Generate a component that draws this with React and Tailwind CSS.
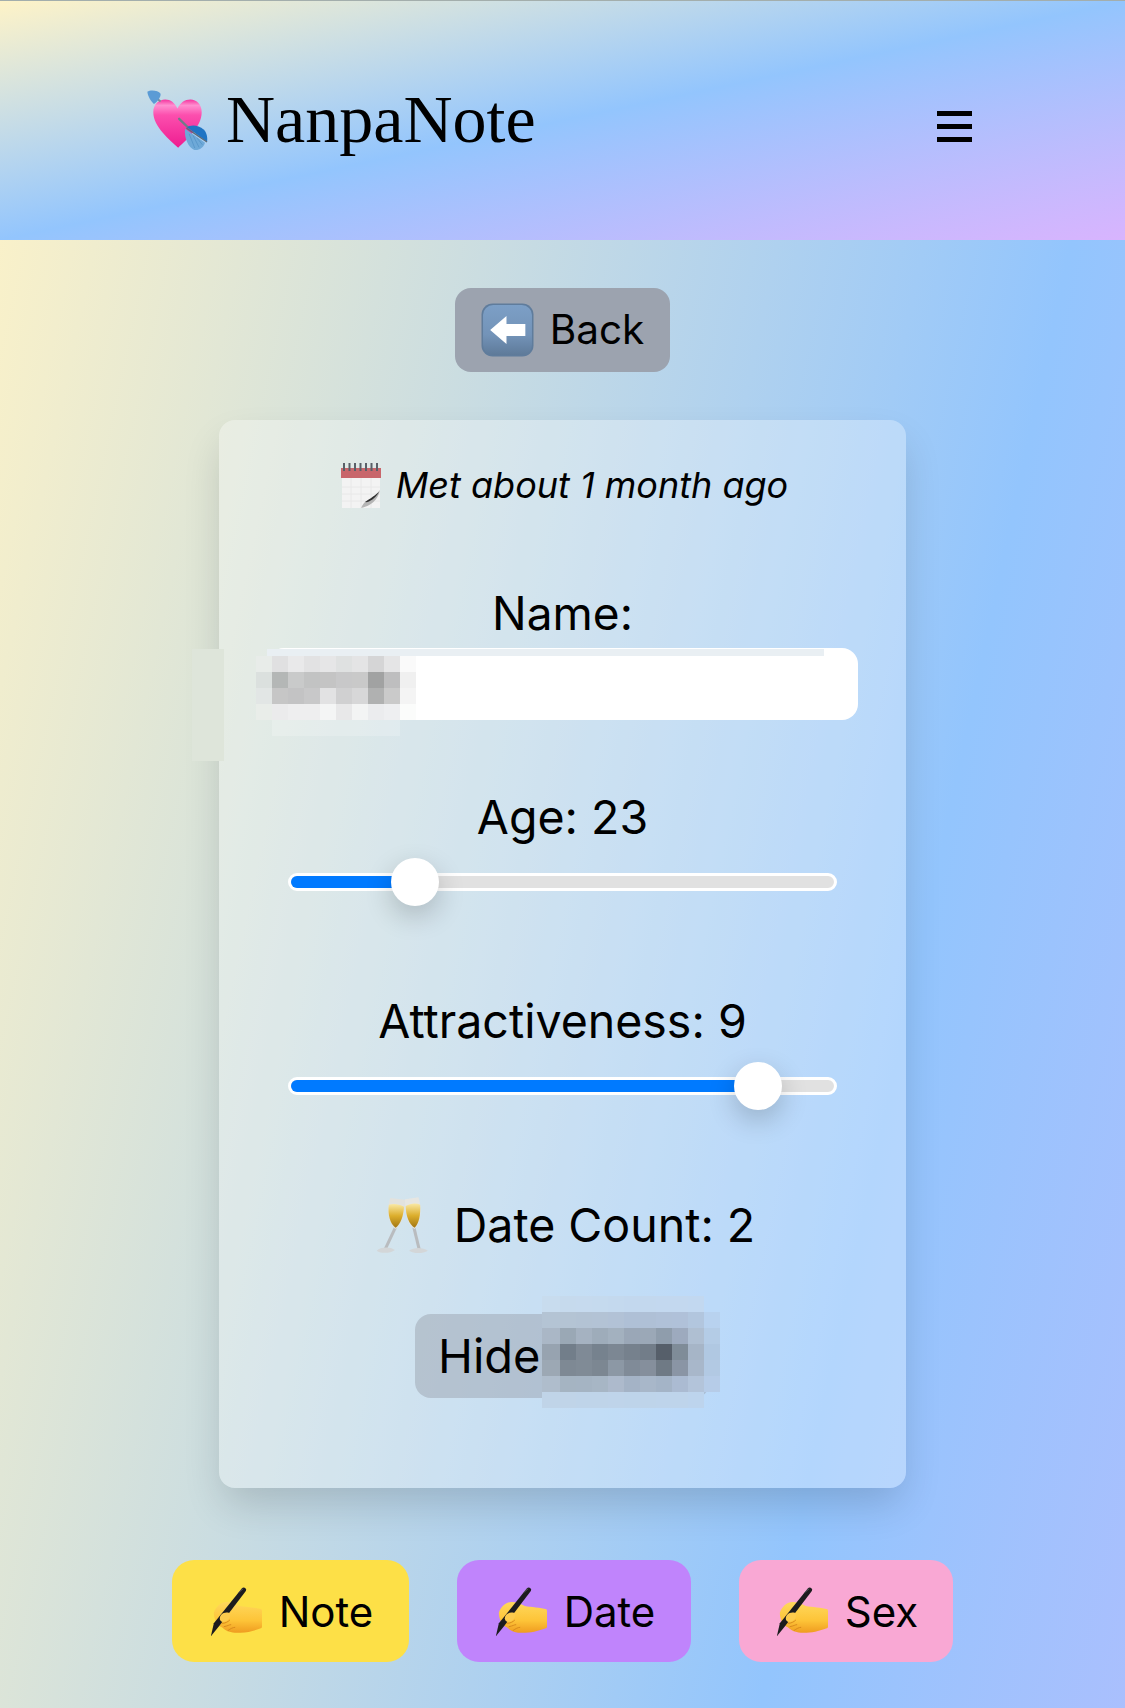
import React from 'react';

const SANS = "font-['Inter','Liberation_Sans',sans-serif]";

const nameBlocks = [
    ['#e8ece9', '#e0e0e1', '#e9e9ea', '#e2e2e3', '#e6e6e7', '#dfe1e1', '#e4e4e5', '#d5d5d6', '#e5e5e6', '#fafafa'],
    ['#dbe0de', '#b4b7b6', '#c9caca', '#c2c3c3', '#c4c4c4', '#c8c8c9', '#c9c9c9', '#a1a2a2', '#bebebf', '#f0f0f0'],
    ['#e2e6e5', '#c6c6c6', '#c3c3c4', '#c8c8c9', '#e2e2e3', '#d0d0d1', '#d7d7d8', '#b0b1b1', '#cacaca', '#f4f4f4'],
    ['#e9ede9', '#ebebec', '#eeeeef', '#eeeeef', '#f4f5f5', '#e8e8e9', '#f3f4f4', '#ebecee', '#eeeff1', '#fbfcfb'],
];

const hideBlocks = [
    ['#c8dcee', '#c6daed', '#c6daee', '#c5daee', '#c4d9ee', '#c3d8ee', '#c3d8ee', '#c3d8ef', '#c3d8ef', '#c2d8f0', 'transparent'],
    ['#b4c4d4', '#b4c4d4', '#b3c3d4', '#b3c3d5', '#b2c2d6', '#afc0d6', '#afc0d6', '#b0c1d8', '#b0c1d9', '#b2c6de', '#b8d2ef'],
    ['#aab7c6', '#9aa8b5', '#a5b2c1', '#9eacba', '#a3b1bf', '#9aa7b7', '#9ba8b7', '#8f9dac', '#9daabe', '#afbfd2', '#b4cce6'],
    ['#97a3b0', '#727e8a', '#7f8a96', '#76828e', '#7c8793', '#76818d', '#727d89', '#565f6a', '#7f8c98', '#a6b5c7', '#b0c8e2'],
    ['#9ca8b4', '#7e8994', '#808b96', '#7c8792', '#8c98a5', '#808b98', '#858f9c', '#6f7a85', '#8a95a5', '#a8b7ca', '#b2c9e3'],
    ['#afbdcc', '#a5b4c2', '#a5b4c3', '#a7b6c5', '#adbacc', '#a4b3c6', '#a8b7c9', '#a4b4c7', '#abbbd2', '#b3c4da', '#b6cce8'],
    ['#c0d4e8', '#c0d4e8', '#bfd4e9', '#bfd4e9', '#bfd4ea', '#bed4ea', '#bed4ea', '#bed4eb', '#bed4eb', '#bdd4ed', 'transparent'],
];

function HeartArrow() {
    return (
        <svg width="63" height="63" viewBox="45 60 190 190" className="shrink-0">
            <defs>
                <linearGradient id="heartFill" x1="0" y1="0" x2="0" y2="1">
                    <stop offset="0" stopColor="#f5359f" />
                    <stop offset="0.12" stopColor="#ff8fd0" />
                    <stop offset="0.32" stopColor="#fc4fae" />
                    <stop offset="1" stopColor="#ee1c90" />
                </linearGradient>
            </defs>
            <path d="M145 237C122 215 70 175 70 130C70 107 86 92 106 92C122 92 135 102 143 119C151 102 165 92 182 92C201 92 216 107 216 130C216 175 168 215 145 237Z" fill="url(#heartFill)" />
            <path d="M80 88L92 98" stroke="#7d8b97" strokeWidth="6" />
            <path d="M52 68C62 62 85 64 92 74C94 84 80 100 72 105C64 98 54 84 52 68Z" fill="#5b9bd5" />
            <path d="M148 150L175 176" stroke="#6f7c88" strokeWidth="7" strokeLinecap="round" />
            <path d="M172 175C180 168 205 166 222 182C232 192 234 208 232 220Z" fill="#1f74c4" />
            <path d="M166 180L226 222C222 236 208 246 194 244C176 238 162 206 166 180Z" fill="#6ea9d8" />
            <path d="M170 178L232 220" stroke="#5c6b78" strokeWidth="4" />
            <path d="M178 195L195 238M190 200L208 236M202 208L218 228" stroke="#4f8fc4" strokeWidth="2" />
        </svg>
    );
}

function BackArrow() {
    return (
        <svg width="53" height="54" viewBox="0 0 52 54" preserveAspectRatio="none" className="shrink-0">
            <defs>
                <linearGradient id="backFill" x1="0" y1="0" x2="0" y2="1">
                    <stop offset="0" stopColor="#7c9fc6" />
                    <stop offset="0.6" stopColor="#7393b8" />
                    <stop offset="1" stopColor="#5e7a99" />
                </linearGradient>
            </defs>
            <rect x="0.5" y="0.5" width="51" height="53" rx="11" fill="#5f7c9c" />
            <rect x="2" y="2" width="48" height="50" rx="10" fill="url(#backFill)" />
            <path d="M9 27L25 13V21H43.5V33H25V41Z" fill="#fff" />
        </svg>
    );
}

function CalendarIcon() {
    return (
        <svg width="40" height="45" viewBox="0 0 40 45" className="shrink-0">
            <rect x="1" y="14" width="38" height="31" fill="#f3f3f3" />
            <path d="M1 24H39M1 31H39M1 38H39M10 14V45M20 14V45M30 14V45" stroke="#e8e8e8" strokeWidth="1" />
            <rect x="0" y="5" width="40" height="10" fill="#c8666b" />
            <path d="M3 0V8M8.500 0V8M14 0V8M19.500 0V8M25 0V8M30.500 0V8M36 0V8" stroke="#5a6068" strokeWidth="2" />
            <path d="M39 27C34 33 30 36 24 39C22 41 21 43 20 45C30 43 37 37 39 27Z" fill="#b5b5b5" />
            <path d="M38 29C32 34 27 37 24 39C27 40 34 36 38 29Z" fill="#2f2f2f" />
        </svg>
    );
}

function Champagne() {
    return (
        <svg width="52" height="58" viewBox="38 36 154 172" className="shrink-0">
            <defs>
                <linearGradient id="wine" x1="0" y1="0" x2="0" y2="1">
                    <stop offset="0" stopColor="#f9e8a4" />
                    <stop offset="0.5" stopColor="#dcae2c" />
                    <stop offset="1" stopColor="#a27612" />
                </linearGradient>
            </defs>
            <path d="M96 128L66 192" stroke="#b9bcbf" strokeWidth="9" />
            <path d="M40 198C52 186 80 186 94 196C80 207 52 207 40 198Z" fill="#d3d6d8" />
            <path d="M80 42L124 47C124 82 116 120 96 134C76 122 68 80 80 42Z" fill="#e2e2de" />
            <path d="M76 62C90 58 106 60 121 68C119 96 111 120 96 130C80 120 72 90 76 62Z" fill="url(#wine)" />
            <path d="M150 128L166 194" stroke="#b9bcbf" strokeWidth="9" />
            <path d="M136 198C150 188 176 188 192 198C176 207 150 207 136 198Z" fill="#d3d6d8" />
            <path d="M124 46L164 40C174 75 172 116 152 134C133 125 122 85 124 46Z" fill="#e6e6e2" />
            <path d="M126 66C140 58 156 56 169 62C170 92 166 118 152 130C136 121 126 95 126 66Z" fill="url(#wine)" />
        </svg>
    );
}

function WritingHand({ id }) {
    return (
        <svg width="52" height="50" viewBox="35 30 155 150" className="shrink-0">
            <defs>
                <linearGradient id={id} x1="0" y1="0" x2="0" y2="1">
                    <stop offset="0" stopColor="#ffd85c" />
                    <stop offset="0.6" stopColor="#fdc438" />
                    <stop offset="1" stopColor="#ef9c20" />
                </linearGradient>
            </defs>
            <path d="M46 110C52 92 68 78 84 78C100 78 112 84 124 90C142 94 172 94 189 100C195 118 195 142 189 156C172 162 150 170 126 170C104 172 84 168 70 154C56 148 46 130 46 110Z" fill={`url(#${id})`} />
            <path d="M76 152C88 150 92 146 98 146M88 164C96 158 104 154 110 154M70 142C80 142 88 138 94 132" stroke="#d98a1c" strokeWidth="3" fill="none" />
            <path d="M131 36C137 31 146 38 142 45L62 150L37 181L46 142Z" fill="#1c1c1e" />
            <path d="M120 50L134 38" stroke="#5a5a60" strokeWidth="3" />
            <path d="M68 116C76 108 90 108 96 114C96 126 86 138 72 138C62 134 62 124 68 116Z" fill="#fdcb4d" />
        </svg>
    );
}

function Mosaic({ rows, className, columns }) {
    return (
        <div className={`absolute grid ${columns} ${className}`}>
            {rows.flat().map((color, i) => (
                <div key={i} className="h-4" style={{ backgroundColor: color }} />
            ))}
        </div>
    );
}

function Slider({ label, thumbClass, fillClass }) {
    return (
        <div className="flex flex-col items-center">
            <div className="text-[46.500px] leading-[54px] text-black">{label}</div>
            <div className="relative mt-[29px] h-[18px] w-[549px] overflow-visible">
                <div className="h-full rounded-full border-[3px] border-white bg-[#e1e1e1]">
                    <div className={`h-full rounded-full bg-[#007aff] ${fillClass}`} />
                </div>
                <div className={`absolute top-[-15px] h-12 w-12 rounded-full bg-white shadow-[0_10px_28px_rgba(0,0,0,0.2)] ${thumbClass}`} />
            </div>
        </div>
    );
}

function ActionButton({ label, color, id, width }) {
    return (
        <button className={`flex h-[102px] items-center justify-center gap-[17px] rounded-[22px] pl-[2px] text-[42px] text-black ${color} ${width}`}>
            <WritingHand id={id} />
            <span>{label}</span>
        </button>
    );
}

export default function App() {
    return (
        <div className={`min-h-[1708px] overflow-hidden ${SANS} bg-[linear-gradient(102deg,#fef3c7_0px,#93c5fd_1098px,#d8b4fe_2196px)]`}>
            <header className="flex h-[240px] items-center justify-between border-t border-[#a3aeac] bg-gradient-to-br from-[#fef3c7] via-[#93c5fd] to-[#d8b4fe] pl-[145px] pr-[153px]">
                <div className="flex items-center gap-[18px]">
                    <HeartArrow />
                    <span className="mb-1 font-['Liberation_Serif',serif] text-[68px] leading-none text-black">NanpaNote</span>
                </div>
                <div className="mt-3 flex w-[35px] flex-col gap-2">
                    <div className="h-[5px] bg-black" />
                    <div className="h-[5px] bg-black" />
                    <div className="h-[5px] bg-black" />
                </div>
            </header>

            <main className="flex flex-col items-center pt-12">
                <button className="flex h-[84px] w-[215px] items-center justify-center gap-4 rounded-2xl bg-[#9ca3af] text-[40.500px] text-black">
                    <BackArrow />
                    <span>Back</span>
                </button>

                <section className="relative mt-12 flex h-[1068px] w-[687px] flex-col items-center rounded-2xl bg-white/30 pt-[43px] shadow-[0_20px_40px_-5px_rgba(0,0,0,0.16)]">
                    <div className="flex items-center gap-[15px] pl-1">
                        <CalendarIcon />
                        <span className="text-[36px] italic leading-[45px] text-black">Met about 1 month ago</span>
                    </div>

                    <div className="mt-[78px] text-[46px] leading-[54px] text-black">Name:</div>
                    <input type="text" readOnly className="mt-[8px] h-[72px] w-[590px] rounded-2xl bg-white" />

                    <div className="mt-[70px]">
                        <Slider label="Age: 23" thumbClass="left-[103px]" fillClass="w-[124px]" />
                    </div>
                    <div className="mt-[103px]">
                        <Slider label="Attractiveness: 9" thumbClass="left-[446px]" fillClass="w-[465px]" />
                    </div>

                    <div className="mt-[101px] flex items-center gap-[26px] pl-[6px]">
                        <Champagne />
                        <span className="text-[46.500px] leading-[54px] text-black">Date Count: 2</span>
                    </div>

                    <button className="mt-[60px] flex h-[84px] w-[295px] items-center rounded-2xl bg-[#9ca3af]/50 pl-[23px] text-[47px] text-black">
                        Hide
                    </button>

                    {/* pixelated bits, the name was blurred out in the screenshot */}
                    <div className="absolute left-[-27px] top-[229px] h-[112px] w-[32px] bg-[#dee5da]" />
                    <div className="absolute left-[48px] top-[229px] h-[7px] w-[557px] bg-[#e9eff3]" />
                    <Mosaic rows={nameBlocks} columns="grid-cols-[repeat(10,16px)]" className="left-[37px] top-[236px]" />
                    <div className="absolute left-[53px] top-[300px] h-4 w-[128px] bg-white/20" />
                    <Mosaic rows={hideBlocks} columns="grid-cols-[18px_repeat(10,16px)]" className="left-[323px] top-[876px]" />
                </section>

                <div className="mt-[72px] flex gap-12">
                    <ActionButton label="Note" color="bg-[#fde047]" id="handNote" width="w-[237px]" />
                    <ActionButton label="Date" color="bg-[#c084fc]" id="handDate" width="w-[234px]" />
                    <ActionButton label="Sex" color="bg-[#f9a8d4]" id="handSex" width="w-[214px]" />
                </div>
            </main>
        </div>
    );
}
